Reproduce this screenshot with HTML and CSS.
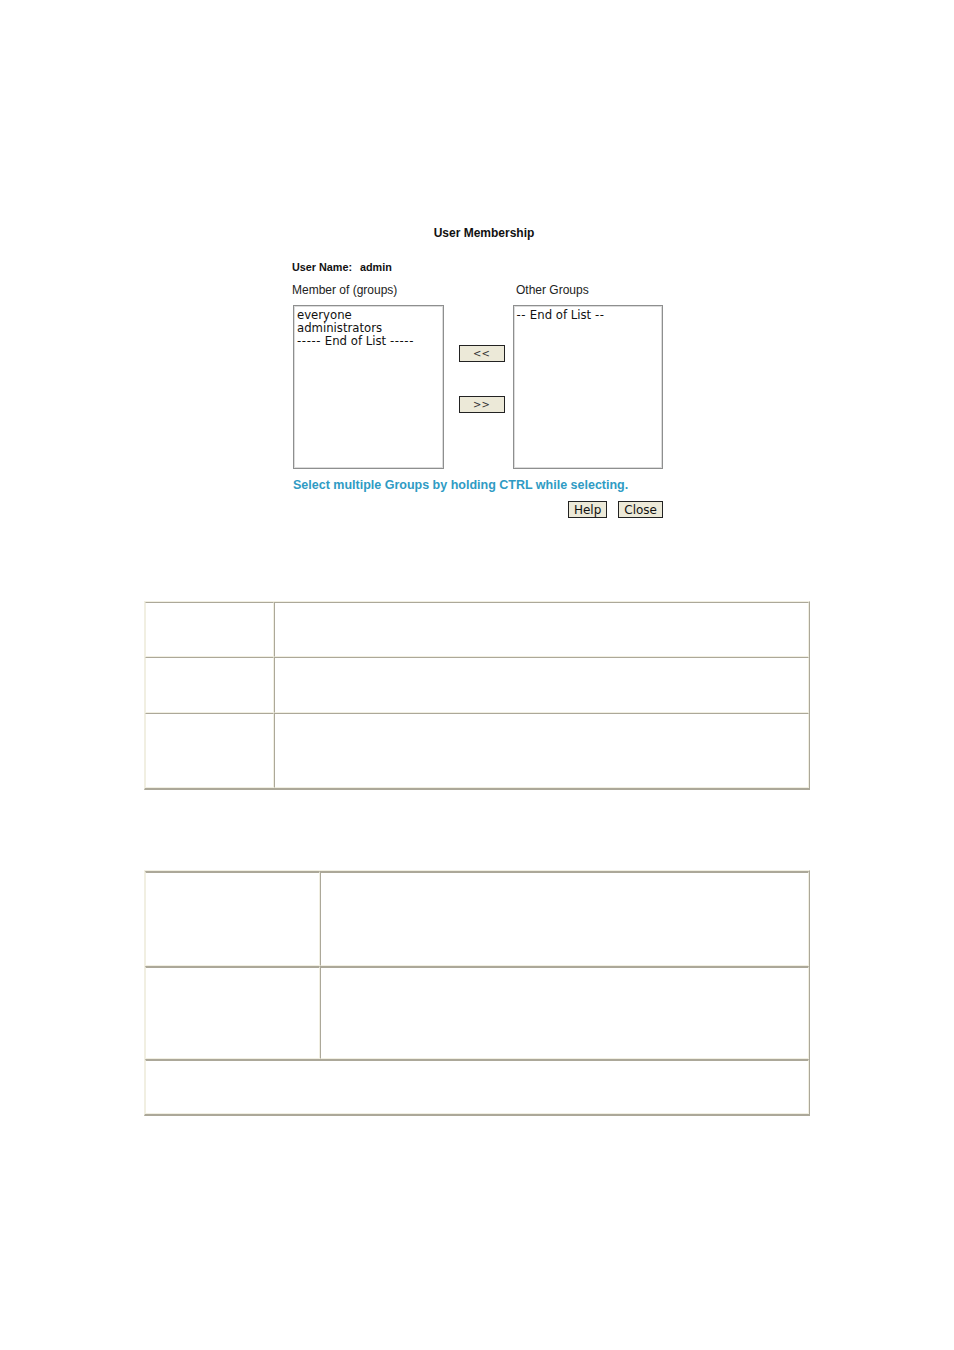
FILE: index.html
```html
<!DOCTYPE html>
<html>
<head>
<meta charset="utf-8">
<link rel="stylesheet" href="styles.css">
</head>
<body>
<div class="page">
  <div class="panel">
    <div class="title">User Membership</div>
    <div class="username"><span class="k">User Name:</span><span class="v">admin</span></div>
    <div class="labels">
      <span class="lab-left">Member of (groups)</span>
      <span class="lab-right">Other Groups</span>
    </div>
    <div class="lists">
      <div class="listbox">
        <div>everyone</div>
        <div>administrators</div>
        <div><span class="dash">-----</span> End of List <span class="dash">-----</span></div>
      </div>
      <div class="movers">
        <button class="mv mv-left">&lt;&lt;</button>
        <button class="mv mv-right">&gt;&gt;</button>
      </div>
      <div class="listbox right">
        <div><span class="dash">--</span> End of List <span class="dash">--</span></div>
      </div>
    </div>
    <div class="hint">Select multiple Groups by holding CTRL while selecting.</div>
    <div class="actions">
      <button class="btn">Help</button>
      <button class="btn">Close</button>
    </div>
  </div>

  <table class="grid t1">
    <tr class="r1"><td class="c1"></td><td></td></tr>
    <tr class="r2"><td class="c1"></td><td></td></tr>
    <tr class="r3"><td class="c1"></td><td></td></tr>
  </table>

  <table class="grid t2">
    <tr class="s1"><td class="d1"></td><td></td></tr>
    <tr class="s2"><td class="d1"></td><td></td></tr>
    <tr class="s3"><td colspan="2"></td></tr>
  </table>
</div>
</body>
</html>
```
FILE: styles.css
```css
html, body { margin: 0; padding: 0; background: #fff; }
body { font-family: "Liberation Sans", Arial, sans-serif; color: #000; }
.page { padding-top: 226px; }

.panel { margin-left: 292px; width: 371px; }
.title { font-weight: bold; font-size: 12px; line-height: 14px; text-align: center; padding-left: 13px; color: #111; }
.username { margin-top: 21px; font-size: 10.8px; font-weight: bold; line-height: 12px; color: #111; }
.username .k { margin-right: 8px; }
.labels { margin-top: 10px; display: flex; font-size: 12px; line-height: 14px; color: #222; }
.lab-left { width: 224px; }
.lists { margin-top: 8px; display: flex; align-items: flex-start; }
.listbox {
  box-sizing: border-box; width: 151px; height: 164px; margin-left: 1px;
  border: 1px solid #8e8f8f; box-shadow: inset 0 0 0 1px #dcdcdc;
  padding: 3px 3px 2px; font-family: "DejaVu Sans", Verdana, sans-serif; font-size: 11.7px; line-height: 13px; color: #111;
  white-space: nowrap; overflow: hidden;
}
.listbox .dash { letter-spacing: 0.6px; }
.listbox.right { margin-left: 0; padding-left: 3px; }
.movers { width: 46px; margin-left: 15px; margin-right: 8px; display: flex; flex-direction: column; padding-top: 40px; }
.mv {
  box-sizing: border-box; width: 46px; height: 17px; margin: 0; padding: 0;
  background: #ece9d8; border: 1px solid #222; font-family: "DejaVu Sans", Verdana, sans-serif; font-size: 10px; line-height: 14px; color: #333;
}
.mv-right { margin-top: 34px; }
.hint { margin-top: 9px; padding-left: 1px; font-weight: bold; font-size: 12.5px; line-height: 14px; color: #2f9bc4; white-space: nowrap; }
.actions { margin-top: 9px; display: flex; justify-content: flex-end; gap: 11px; }
.btn {
  box-sizing: border-box; height: 17px; margin: 0; padding: 0 5px;
  background: #ece9d8; border: 1px solid #222; font-family: "DejaVu Sans", Tahoma, sans-serif; font-size: 12px; line-height: 14px; color: #111;
}

.grid { border-collapse: separate; border-spacing: 0; width: 666px; margin-left: 144px;
  border-top: 1px solid #f1efe2; border-left: 1px solid #f1efe2; border-right: 1px solid #aca899; border-bottom: 2px solid #aca899; }
.grid td { padding: 0; border-top: 1px solid #aca899; border-left: 1px solid #aca899; border-right: 1px solid #f1efe2; border-bottom: 1px solid #f1efe2; }
.grid td:first-child { border-left-color: #f1efe2; }
.t1 { margin-top: 83px; }
.t1 .c1 { width: 127px; }
.t1 .r1 td { height: 53px; }
.t1 .r2 td { height: 54px; }
.t1 .r3 td { height: 73px; }
.t2 { margin-top: 80px; }
.t2 .d1 { width: 173px; }
.t2 .s1 td { height: 92px; border-top-width: 2px; }
.t2 .s2 td { height: 90px; border-top-width: 2px; }
.t2 .s3 td { height: 52px; border-top-width: 2px; }
```
